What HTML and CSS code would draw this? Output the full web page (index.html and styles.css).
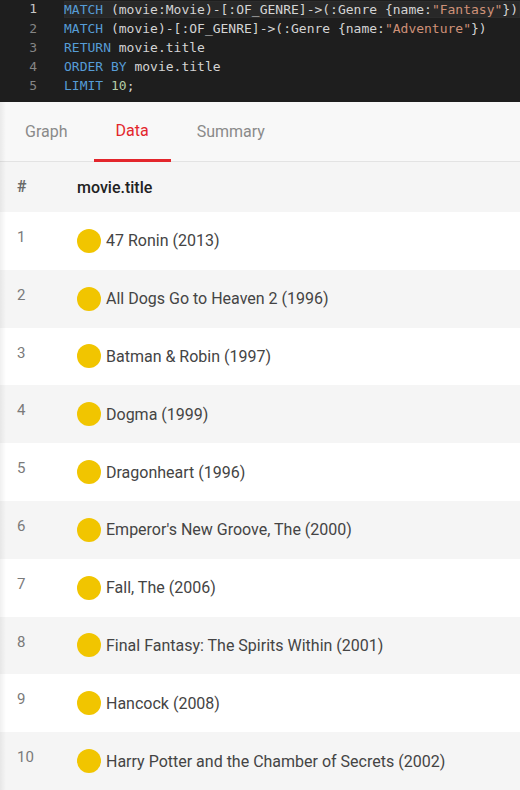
FILE: index.html
```html
<!DOCTYPE html>
<html>
<head>
<meta charset="utf-8">
<link rel="stylesheet" href="styles.css">
</head>
<body>
<div class="editor">
  <div class="line current"><span class="ln">1</span><span class="code"><span class="kw">MATCH</span> (movie:Movie)-[:OF_GENRE]-&gt;(:Genre {name:<span class="str">"Fantasy"</span>})</span></div>
  <div class="line"><span class="ln">2</span><span class="code"><span class="kw">MATCH</span> (movie)-[:OF_GENRE]-&gt;(:Genre {name:<span class="str">"Adventure"</span>})</span></div>
  <div class="line"><span class="ln">3</span><span class="code"><span class="kw">RETURN</span> movie.title</span></div>
  <div class="line"><span class="ln">4</span><span class="code"><span class="kw">ORDER BY</span> movie.title</span></div>
  <div class="line"><span class="ln">5</span><span class="code"><span class="kw">LIMIT</span> <span class="num">10</span>;</span></div>
</div>
<div class="panel">
  <div class="tabs">
    <div class="tab">Graph</div>
    <div class="tab active">Data</div>
    <div class="tab">Summary</div>
  </div>
  <div class="table">
    <div class="row head"><div class="idx">#</div><div class="title">movie.title</div></div>
    <div class="row"><div class="idx">1</div><div class="title"><span class="dot"></span>47 Ronin (2013)</div></div>
    <div class="row"><div class="idx">2</div><div class="title"><span class="dot"></span>All Dogs Go to Heaven 2 (1996)</div></div>
    <div class="row"><div class="idx">3</div><div class="title"><span class="dot"></span>Batman &amp; Robin (1997)</div></div>
    <div class="row"><div class="idx">4</div><div class="title"><span class="dot"></span>Dogma (1999)</div></div>
    <div class="row"><div class="idx">5</div><div class="title"><span class="dot"></span>Dragonheart (1996)</div></div>
    <div class="row"><div class="idx">6</div><div class="title"><span class="dot"></span>Emperor's New Groove, The (2000)</div></div>
    <div class="row"><div class="idx">7</div><div class="title"><span class="dot"></span>Fall, The (2006)</div></div>
    <div class="row"><div class="idx">8</div><div class="title"><span class="dot"></span>Final Fantasy: The Spirits Within (2001)</div></div>
    <div class="row"><div class="idx">9</div><div class="title"><span class="dot"></span>Hancock (2008)</div></div>
    <div class="row"><div class="idx">10</div><div class="title"><span class="dot"></span>Harry Potter and the Chamber of Secrets (2002)</div></div>
  </div>
</div>
</body>
</html>
```
FILE: styles.css
```css
html, body {
  margin: 0;
  padding: 0;
  width: 520px;
  height: 790px;
  overflow: hidden;
  background: #ffffff;
}
.editor {
  background: #1e1e1e;
  height: 102px;
  box-sizing: border-box;
  font-family: "DejaVu Sans Mono", monospace;
  font-size: 13px;
  color: #d4d4d4;
}
.line {
  display: flex;
  height: 19px;
  line-height: 19px;
}
.ln {
  width: 37px;
  text-align: right;
  color: #858585;
  flex: none;
}
.line.current .ln { color: #c6c6c6; }
.code {
  margin-left: 27px;
  flex: 1;
  white-space: pre;
}
.line.current { line-height: 17px; }
.line.current .code {
  background: #282828;
  height: 17px;
  line-height: 17px;
  margin-top: 1px;
  box-shadow: inset 0 0 0 1px #2c2c2c;
}
.kw { color: #569cd6; }
.str { color: #ce9178; }
.num { color: #b5cea8; }

.panel {
  font-family: Roboto, "Noto Sans", sans-serif;
  position: relative;
}
.panel::before {
  content: "";
  position: absolute;
  left: 0;
  top: 0;
  bottom: 0;
  width: 6px;
  background: linear-gradient(to right, rgba(0,0,0,0.06), rgba(0,0,0,0));
  pointer-events: none;
}
.tabs {
  display: flex;
  gap: 4px;
  padding-left: 3px;
  height: 59px;
  background: #f8f8f8;
  border-bottom: 1px solid #e3e3e3;
}
.tab {
  padding: 0 22px;
  font-size: 16px;
  color: #8a8a8a;
  line-height: 59px;
  box-sizing: border-box;
}
.tab.active {
  color: #e3262c;
  border-bottom: 3px solid #e3262c;
  line-height: 58px;
  height: 60px;
  margin-bottom: -1px;
}
.row {
  display: flex;
  height: 57.8px;
  background: #ffffff;
  color: #444444;
}
.row:nth-child(odd) { background: #f5f5f5; }
.row.head {
  height: 50px;
  align-items: center;
}
.idx {
  width: 77px;
  box-sizing: border-box;
  padding-left: 17px;
  padding-top: 15px;
  font-size: 15px;
  line-height: 20px;
  color: #7a7a7a;
  flex: none;
}
.head .idx {
  padding-top: 0;
  font-weight: 700;
  color: #6a6a6a;
  font-size: 16px;
}
.title {
  display: flex;
  align-items: center;
  font-size: 16px;
  color: #444444;
}
.head .title {
  font-weight: 500;
  color: #222222;
}
.dot {
  width: 24px;
  height: 24px;
  border-radius: 50%;
  background: #f1c500;
  margin-right: 5px;
  flex: none;
}
```
